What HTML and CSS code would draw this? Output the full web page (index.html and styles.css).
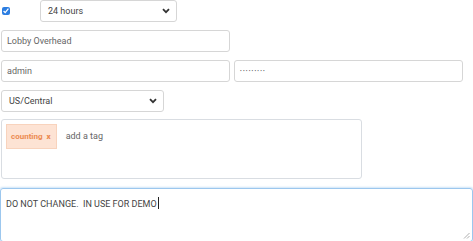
FILE: index.html
```html
<!DOCTYPE html>
<html lang="en">
<head>
    <meta charset="UTF-8">
    <meta name="viewport" content="width=device-width, initial-scale=1.0">
    <title>Camera Settings</title>
    <link rel="stylesheet" href="styles.css">
</head>
<body>
    <form class="settings">
        <div class="row">
            <input type="checkbox" class="check" checked>
            <div class="select select-hours">
                <span>24 hours</span>
                <svg class="caret" width="8" height="6" viewBox="0 0 8 6"><path d="M1 1.2 L4 4.2 L7 1.2" fill="none" stroke="#333" stroke-width="1.8"/></svg>
            </div>
        </div>
        <div class="field field-name">Lobby Overhead</div>
        <div class="row pair">
            <div class="field field-half">admin</div>
            <div class="field field-half dots">&bull;&bull;&bull;&bull;&bull;&bull;&bull;&bull;&bull;</div>
        </div>
        <div class="select select-tz">
            <span>US/Central</span>
            <svg class="caret" width="8" height="6" viewBox="0 0 8 6"><path d="M1 1.2 L4 4.2 L7 1.2" fill="none" stroke="#333" stroke-width="1.8"/></svg>
        </div>
        <div class="tags">
            <span class="tag">counting <b>x</b></span>
            <span class="tag-input">add a tag</span>
        </div>
        <div class="notes">DO NOT CHANGE.&nbsp; IN USE FOR DEMO<span class="cursor"></span>
            <svg class="grip" width="7" height="7" viewBox="0 0 7 7"><path d="M6.5 1 L1 6.5 M6.5 4 L4 6.5" stroke="#999" stroke-width="0.8"/></svg>
        </div>
    </form>
</body>
</html>
```

FILE: styles.css
```css
body {
    margin: 0;
    background: #fff;
    color: #555;
    font-family: Roboto, "Liberation Sans", sans-serif;
    font-size: 9px;
}

.settings {
    display: flex;
    flex-direction: column;
    gap: 8px;
}

.row {
    display: flex;
    align-items: center;
}

.check {
    width: 8px;
    height: 8px;
    margin: 0 0 0 2px;
    accent-color: #2b7de1;
}

.select {
    display: flex;
    align-items: center;
    justify-content: space-between;
    box-sizing: border-box;
    height: 22px;
    padding: 0 6px 0 7px;
    border: 1px solid #d6d6d6;
    border-radius: 3px;
    background: #fff;
    color: #444;
}

.select-hours {
    width: 137px;
    margin-left: 30px;
}

.select-tz {
    width: 163px;
    margin-left: 1px;
}

.field {
    box-sizing: border-box;
    height: 22px;
    line-height: 20px;
    padding: 0 5px;
    border: 1px solid #d6d6d6;
    border-radius: 3px;
    color: #666;
}

.field-name {
    width: 229px;
    margin-left: 1px;
}

.pair {
    gap: 4px;
    margin-left: 1px;
}

.field-half {
    width: 229px;
}

.dots {
    font-size: 5px;
    letter-spacing: 1.2px;
    color: #555;
}

.tags {
    display: flex;
    align-items: flex-start;
    box-sizing: border-box;
    width: 361px;
    height: 60px;
    margin: -1px 0 0 1px;
    padding: 4px;
    border: 1px solid #d9dde2;
    border-radius: 3px;
}

.tag {
    height: 25px;
    line-height: 24px;
    padding: 0 5px 0 4px;
    background: #fde3d4;
    border: 1px solid #f8d3bd;
    box-sizing: border-box;
    color: #ec8b52;
    font-weight: bold;
    font-size: 8px;
}

.tag b {
    margin-left: 2px;
}

.tag-input {
    margin: 7px 0 0 9px;
    color: #666;
}

.notes {
    position: relative;
    box-sizing: border-box;
    width: 473px;
    height: 54px;
    margin-top: 1px;
    padding: 8px 5px;
    border: 1px solid #9cc7ee;
    border-radius: 3px;
    box-shadow: 0 0 2px 1px #cfe4f7;
    color: #444;
}

.cursor {
    display: inline-block;
    width: 1px;
    height: 12px;
    margin-left: 1px;
    vertical-align: -2px;
    background: #222;
}

.grip {
    position: absolute;
    right: 2px;
    bottom: 2px;
}
```
